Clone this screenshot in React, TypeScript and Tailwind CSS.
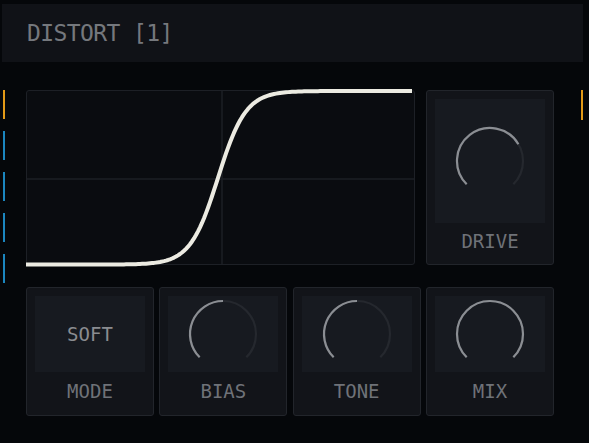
import React from "react";

const mono = { fontFamily: '"DejaVu Sans Mono", "Liberation Mono", monospace' };

// tanh transfer curve, in panel-local coords (389 x 175)
function curvePath() {
  const pts: string[] = [];
  for (let x = 0; x <= 386; x += 2) {
    const y = 87.8 - 86.8 * Math.tanh(0.036 * (x - 192));
    pts.push(`${x === 0 ? "M" : "L"}${x},${y.toFixed(2)}`);
  }
  return pts.join(" ");
}

function Knob({ value }: { value: number }) {
  const r = 33;
  const cx = 40;
  const cy = 40;
  const start = (135 * Math.PI) / 180;
  const arc = (from: number, to: number) => {
    const a0 = start + from * 1.5 * Math.PI;
    const a1 = start + to * 1.5 * Math.PI;
    const x0 = cx + r * Math.cos(a0);
    const y0 = cy + r * Math.sin(a0);
    const x1 = cx + r * Math.cos(a1);
    const y1 = cy + r * Math.sin(a1);
    const large = (to - from) * 270 > 180 ? 1 : 0;
    return `M${x0.toFixed(2)},${y0.toFixed(2)} A${r},${r} 0 ${large} 1 ${x1.toFixed(2)},${y1.toFixed(2)}`;
  };
  return (
    <svg width="80" height="80" viewBox="0 0 80 80">
      <path d={arc(0, 1)} fill="none" stroke="#25282e" strokeWidth="2.2" />
      {value > 0 && <path d={arc(0, value)} fill="none" stroke="#8b8e93" strokeWidth="2.2" />}
    </svg>
  );
}

function Card({ label, children, tall }: { label: string; children: React.ReactNode; tall?: boolean }) {
  return (
    <div className={`flex flex-col rounded-[3px] border border-[#22252b] bg-[#121419] px-[8px] pt-[8px] ${tall ? "h-[175px] w-[128px]" : "h-[129px] w-[128px]"}`}>
      <div className={`flex items-center justify-center bg-[#171a20] ${tall ? "h-[124px]" : "h-[76px]"}`}>{children}</div>
      <div className="flex flex-1 items-center justify-center pb-[4px] text-[19px] leading-none text-[#6f7278]" style={mono}>
        {label}
      </div>
    </div>
  );
}

export default function App() {
  const bars = ["#e39a17", "#1b86bf", "#1b86bf", "#1b86bf", "#1b86bf"];
  return (
    <div className="h-[443px] w-[589px] overflow-hidden bg-[#05070a]">
      {/* Header */}
      <div className="ml-[2px] mt-[4px] flex h-[58px] w-[581px] items-center bg-[#101217] pl-[25px]">
        <span className="text-[23px] leading-none tracking-[-0.6px] text-[#75787d]" style={mono}>
          DISTORT [1]
        </span>
      </div>

      <div className="mt-[28px] flex">
        {/* Left indicators */}
        <div className="ml-[3px] flex w-[2px] flex-col gap-[12px]">
          {bars.map((c, i) => (
            <div key={i} className="h-[29px] w-[2px]" style={{ backgroundColor: c }} />
          ))}
        </div>

        <div className="ml-[21px] flex w-[528px] flex-col gap-[22px]">
          <div className="flex gap-[11px]">
            {/* Transfer curve */}
            <div className="relative h-[175px] w-[389px] rounded-[3px] border border-[#1d2026] bg-[#0a0c10]">
              <svg className="absolute left-[-1px] top-[-1px] overflow-visible" width="389" height="175" viewBox="0 0 389 175">
                <line x1="196" y1="1" x2="196" y2="174" stroke="#1c1f25" strokeWidth="1.5" />
                <line x1="1" y1="89" x2="388" y2="89" stroke="#1c1f25" strokeWidth="1.5" />
                <path d={curvePath()} fill="none" stroke="#ecebe2" strokeWidth="4" strokeLinejoin="round" />
              </svg>
            </div>
            <Card label="DRIVE" tall>
              <Knob value={0.72} />
            </Card>
          </div>

          <div className="flex gap-[5.33px]">
            <Card label="MODE">
              <span className="text-[19px] leading-none text-[#8a8c90]" style={mono}>
                SOFT
              </span>
            </Card>
            <Card label="BIAS">
              <Knob value={0.5} />
            </Card>
            <Card label="TONE">
              <Knob value={0.5} />
            </Card>
            <Card label="MIX">
              <Knob value={1} />
            </Card>
          </div>
        </div>

        {/* Right indicator */}
        <div className="ml-[27px] h-[30px] w-[2px] bg-[#e39a17]" />
      </div>
    </div>
  );
}
